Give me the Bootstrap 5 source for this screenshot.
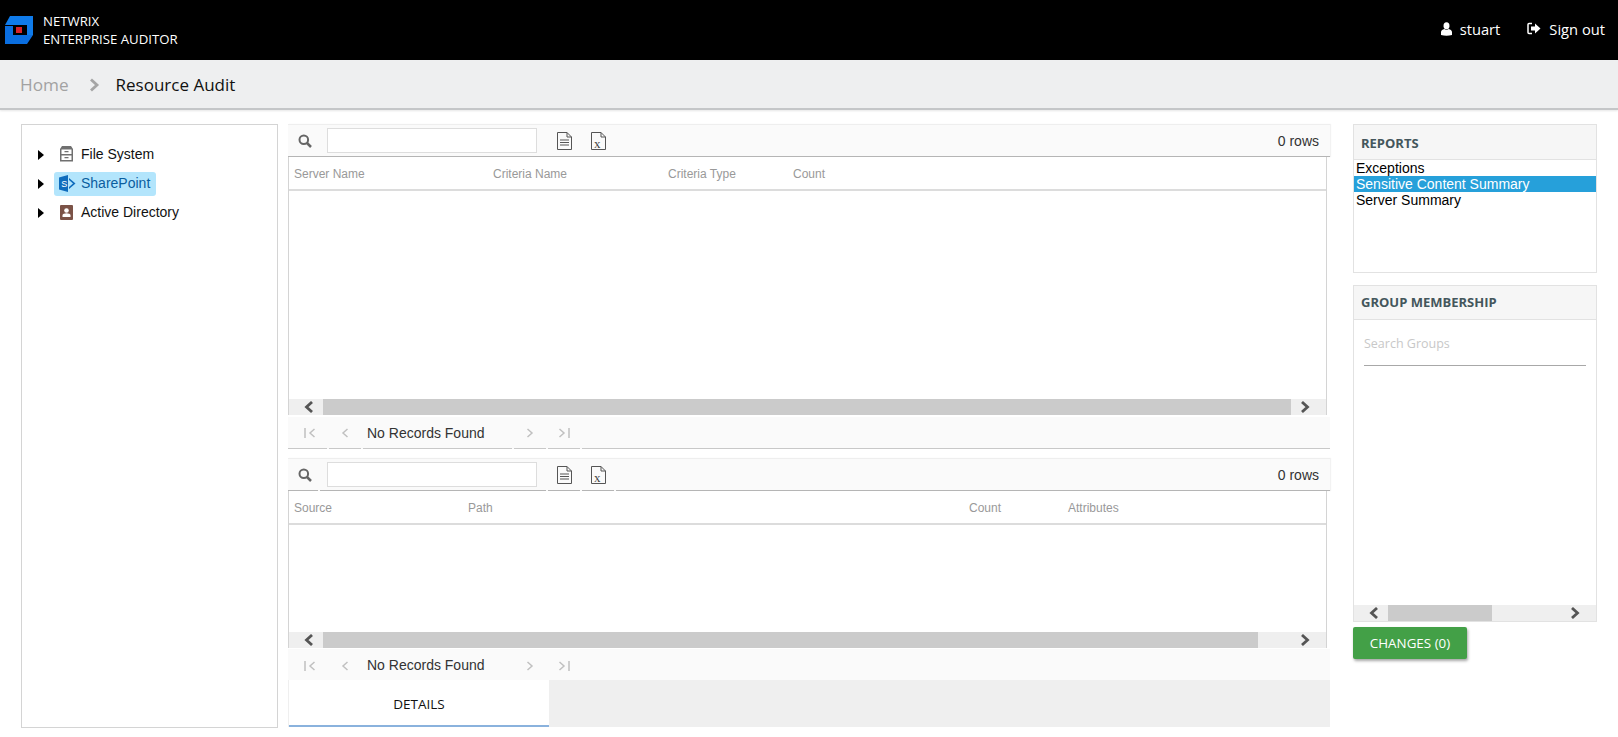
<!DOCTYPE html>
<html lang="en">
<head>
<meta charset="utf-8">
<title>Resource Audit</title>
<link rel="stylesheet" href="https://cdn.jsdelivr.net/npm/bootstrap@5.3.0/dist/css/bootstrap.min.css">
<style>
html,body{height:737px;overflow:hidden;background:#fff;font-family:"Liberation Sans",Arial,sans-serif;font-size:14px;color:#000}
.ui-font{font-family:"Open Sans","Noto Sans",sans-serif}
.top-bar{height:60px;background:#000;padding:0 13px 0 5px}
.brand-text{font-size:13.2px;line-height:18px;color:#fff;margin-left:9px;font-weight:500;white-space:nowrap}
.top-nav{padding-bottom:2px}
.top-link{color:#fff;font-size:14.7px;text-decoration:none}
.top-link svg{margin-right:8px}
.link-gap{margin-right:27px}
.crumb-bar{height:50px;background:#eeeff0;border-bottom:2px solid #c4c6c8;padding-left:20px;padding-top:2px;box-shadow:0 1px 2px rgba(0,0,0,.1)}
.crumb-home{font-size:17.2px;color:#a2a2a2;text-decoration:none}
.crumb-now{font-size:17px;color:#111}
.crumb-sep{margin:0 16px 0 19px}
.page-main{padding:14px 21px 0 21px;height:618px}
.tree-panel{width:257px;height:604px;border:1px solid #d4d4d4;margin-right:10px;padding-top:15px;flex:none}
.tree-row{height:29px;padding-left:16px}
.tree-arrow{width:0;height:0;border-left:6px solid #000;border-top:5px solid transparent;border-bottom:5px solid transparent;margin-right:10px}
.tree-item{height:24px;padding:0 6px 0 5px;border-radius:3px;font-size:14px;color:#111}
.tree-item svg{margin-right:7px}
.tree-active svg{margin-right:5px}
.tree-active{background:#b3e5fc;color:#0b5e9f}
.center-col{width:1042px;flex:none}
.tool-bar{height:33px;background:#fafafa;border-top:1px solid #eee;border-bottom:1px solid #b5b5b5;width:1042px;box-shadow:1px 0 1px rgba(0,0,0,.05)}
.tool-split{border-bottom:0;margin-top:9px}
.seg{height:32px;border-bottom:1px solid #b5b5b5;margin-right:2px}
.tool-flat .seg{border-bottom:0}
.seg-search{width:30px;padding-left:10px}
.seg-input{width:226px;padding-left:7px}
.seg-icon{width:32px}
.search-box{width:210px;height:25px;border:1px solid #ddd;background:#fff;display:block}
.row-count{margin-left:auto;font-size:14px;color:#333;padding:1px 11px 0 0}
.grid-box{width:1039px;border-left:1px solid #d4d4d4;border-right:1px solid #d4d4d4;background:#fff}
.grid-head{height:34px;padding-top:2px;border-bottom:2px solid #dcdcdc;font-size:12px;color:#999}
.col-a1{width:204px;padding-left:5px}.col-a2{width:175px}.col-a3{width:125px}
.col-b1{width:179px;padding-left:5px}.col-b2{width:501px}.col-b3{width:99px}
.grid-body-a{height:208px}
.grid-body-b{height:107px}
.h-scroll{height:16px;background:#efefef}
.scroll-left{width:34px;height:16px;flex:none;padding-left:14px}
.scroll-right{height:16px;padding-right:15px;min-width:35px;flex:none}
.scroll-thumb{height:16px;background:#cbcbcb}
.thumb-b{flex:none;width:935px}
.pager-strip{height:32px;background:#fafafa;width:1042px;margin-top:2px;font-size:14px;color:#333}
.pager-seg{height:32px;padding-top:1px;border-bottom:1px solid #c8c8c8;margin-right:2px}
.pager-first{width:39px;padding-left:16px}
.pager-arrow{width:32px}
.pager-text{width:149px;padding-left:4px}
.pager-flat{margin-top:1px}
.pager-flat .pager-seg{border-bottom:0}
.tab-strip{height:47px;width:1042px;background:#efefef;margin-top:-1px}
.tab-on{width:260px;height:47px;margin-left:1px;padding-top:4px;background:#fff;border-bottom:2px solid #8ab2dd;color:#111;font-size:13.5px}
.right-col{width:244px;margin-left:23px;flex:none}
.side-panel{border:1px solid #e2e2e2;background:#fff}
.side-head{height:34px;background:#f6f6f6;font-size:13px;font-weight:700;color:#44565c;padding-left:7px;border-bottom:1px solid #e2e2e2}
.reports{height:149px;margin-bottom:12px}
.reports .side-head{height:35px;padding-top:3px}
.report-item{height:16px;line-height:16px;padding-left:2px;font-size:14px;color:#000}
.report-on{background:#26a0da;color:#fff}
.groups{height:337px}
.group-search{margin:14px 10px 0 10px;height:32px;border-bottom:1px solid #a8a8a8;font-size:12.5px;color:#c8c8c8;padding-top:1px}
.groups-body{height:239px}
.thumb-c{flex:none;width:104px}
.changes-btn{width:114px;height:32px;margin-top:5px;background:#43a047;color:#fff;border:0;border-radius:2px;font-size:13.4px;box-shadow:1px 2px 3px rgba(0,0,0,.35);padding:0}
.changes-btn:hover{background:#43a047;color:#fff}
</style>
</head>
<body>
<header class="top-bar d-flex align-items-center justify-content-between">
  <div class="d-flex align-items-center">
    <svg width="29" height="29" viewBox="0 0 29 29"><path fill="#0f7bea" d="M5 0H28V19H22V9H0Z"/><path fill="#0a6ee0" d="M0 10H8V19H28L22 28H0Z"/><rect x="11" y="11" width="6" height="6" fill="#d8232a"/></svg>
    <div class="brand-text ui-font">NETWRIX<br>ENTERPRISE AUDITOR</div>
  </div>
  <nav class="top-nav d-flex align-items-center ui-font">
    <a class="top-link link-gap d-flex align-items-center" href="#"><svg width="11" height="14" viewBox="0 0 11 14"><ellipse cx="5.500" cy="3.800" rx="3" ry="3.500" fill="#fff"/><path fill="#fff" d="M0 13V10C0 8.300 1.800 7.500 3.200 7 4.500 8 6.500 8 7.800 7 9.200 7.500 11 8.300 11 10V13Q5.500 14.500 0 13Z"/></svg>stuart</a>
    <a class="top-link d-flex align-items-center" href="#"><svg width="14" height="13" viewBox="0 0 14 13"><path fill="none" stroke="#fff" stroke-width="1.500" d="M5 1.500H2Q1 1.500 1 2.500V10.500Q1 11.500 2 11.500H5"/><path fill="#fff" d="M4 4.500H8V1.500L13.500 6.500 8 11.500V8.500H4Z"/></svg>Sign out</a>
  </nav>
</header>
<div class="crumb-bar d-flex align-items-center ui-font">
  <a class="crumb-home" href="#">Home</a>
  <svg class="crumb-sep" width="12" height="14" viewBox="0 0 12 14"><path fill="none" stroke="#a5a5a5" stroke-width="2.800" d="M3 1.500 9 7 3 12.500"/></svg>
  <span class="crumb-now">Resource Audit</span>
</div>
<main class="page-main d-flex align-items-start">
  <aside class="tree-panel">
    <div class="tree-row d-flex align-items-center"><i class="tree-arrow"></i><div class="tree-item d-flex align-items-center"><svg width="15" height="17" viewBox="0 0 15 17"><path fill="#707070" d="M3 0H12L14 3V15.500H1V3Z"/><path fill="#fff" d="M2.500 3.500H12.500V8H2.500ZM2.500 9.500H12.500V14H2.500Z"/><path fill="#707070" d="M5.500 5H9.500V6.300H5.500ZM5.500 11H9.500V12.300H5.500Z"/></svg>File System</div></div>
    <div class="tree-row d-flex align-items-center"><i class="tree-arrow"></i><div class="tree-item tree-active d-flex align-items-center"><svg width="17" height="17" viewBox="0 0 17 17"><path fill="#0f6cbd" d="M0 2.500 9 0V17L0 14.500Z"/><path fill="#0f6cbd" d="M10 3 16.500 8.500 10 14V12L14 8.500 10 5Z"/><text x="2.300" y="12" font-size="9" font-family="Liberation Sans" fill="#fff">S</text></svg>SharePoint</div></div>
    <div class="tree-row d-flex align-items-center"><i class="tree-arrow"></i><div class="tree-item d-flex align-items-center"><svg width="15" height="15" viewBox="0 0 15 15"><rect x="1" width="13" height="15" rx="1" fill="#7b5347"/><circle cx="7.500" cy="5.500" r="2.300" fill="#fff"/><path fill="#fff" d="M3.500 12V10Q4 8.300 7.500 8.300 11 8.300 11.500 10V12Z"/></svg>Active Directory</div></div>
  </aside>

  <section class="center-col">
    <div class="tool-bar tool-flat d-flex align-items-center">
      <div class="seg seg-search d-flex align-items-center"><svg width="14" height="14" viewBox="0 0 14 14"><circle cx="5.800" cy="5.800" r="4.300" fill="none" stroke="#666" stroke-width="2"/><path stroke="#666" stroke-width="2.500" d="M9 9 13 13"/></svg></div>
      <div class="seg seg-input d-flex align-items-center"><input class="search-box" type="text" aria-label="Search"></div>
      <div class="seg seg-icon d-flex align-items-center justify-content-center"><svg width="15" height="18" viewBox="0 0 15 18"><path fill="none" stroke="#555" d="M.5.500H10L14.500 5V17.500H.5ZM10 .5V5H14.500"/><path stroke="#555" d="M3 8H12M3 10.500H12M3 13H12"/></svg></div>
      <div class="seg seg-icon d-flex align-items-center justify-content-center"><svg width="15" height="18" viewBox="0 0 15 18"><path fill="none" stroke="#555" d="M.5.500H10L14.500 5V17.500H.5ZM10 .5V5H14.500"/><text x="3" y="15.500" font-size="13" font-family="Liberation Serif" fill="#444">x</text></svg></div>
      <span class="row-count">0 rows</span>
    </div>
    <div class="grid-box">
      <div class="grid-head d-flex align-items-center"><span class="col-a1">Server Name</span><span class="col-a2">Criteria Name</span><span class="col-a3">Criteria Type</span><span>Count</span></div>
      <div class="grid-body-a"></div>
      <div class="h-scroll d-flex">
        <div class="scroll-left d-flex align-items-center"><svg width="12" height="12" viewBox="0 0 12 12"><path fill="none" stroke="#555" stroke-width="2.800" d="M9 1 3.500 6 9 11"/></svg></div>
        <div class="scroll-thumb flex-grow-1"></div>
        <div class="scroll-right d-flex align-items-center justify-content-end"><svg width="12" height="12" viewBox="0 0 12 12"><path fill="none" stroke="#555" stroke-width="2.800" d="M3 1 8.500 6 3 11"/></svg></div>
      </div>
    </div>
    <div class="pager-strip d-flex align-items-center">
      <div class="pager-seg pager-first d-flex align-items-center"><svg width="12" height="10" viewBox="0 0 12 10"><path fill="none" stroke="#c0c0c0" stroke-width="1.500" d="M1 0V10M10.500 1 6 5 10.500 9"/></svg></div>
      <div class="pager-seg pager-arrow d-flex align-items-center justify-content-center"><svg width="8" height="10" viewBox="0 0 8 10"><path fill="none" stroke="#c0c0c0" stroke-width="1.500" d="M6.500 1 2 5 6.500 9"/></svg></div>
      <div class="pager-seg pager-text d-flex align-items-center">No Records Found</div>
      <div class="pager-seg pager-arrow d-flex align-items-center justify-content-center"><svg width="8" height="10" viewBox="0 0 8 10"><path fill="none" stroke="#c0c0c0" stroke-width="1.500" d="M1.500 1 6 5 1.500 9"/></svg></div>
      <div class="pager-seg pager-arrow d-flex align-items-center justify-content-center"><svg width="12" height="10" viewBox="0 0 12 10"><path fill="none" stroke="#c0c0c0" stroke-width="1.500" d="M1.500 1 6 5 1.500 9M11 0V10"/></svg></div>
      <div class="pager-seg flex-grow-1 me-0"></div>
    </div>

    <div class="tool-bar tool-split d-flex align-items-center">
      <div class="seg seg-search d-flex align-items-center"><svg width="14" height="14" viewBox="0 0 14 14"><circle cx="5.800" cy="5.800" r="4.300" fill="none" stroke="#666" stroke-width="2"/><path stroke="#666" stroke-width="2.500" d="M9 9 13 13"/></svg></div>
      <div class="seg seg-input d-flex align-items-center"><input class="search-box" type="text" aria-label="Search"></div>
      <div class="seg seg-icon d-flex align-items-center justify-content-center"><svg width="15" height="18" viewBox="0 0 15 18"><path fill="none" stroke="#555" d="M.5.500H10L14.500 5V17.500H.5ZM10 .5V5H14.500"/><path stroke="#555" d="M3 8H12M3 10.500H12M3 13H12"/></svg></div>
      <div class="seg seg-icon d-flex align-items-center justify-content-center"><svg width="15" height="18" viewBox="0 0 15 18"><path fill="none" stroke="#555" d="M.5.500H10L14.500 5V17.500H.5ZM10 .5V5H14.500"/><text x="3" y="15.500" font-size="13" font-family="Liberation Serif" fill="#444">x</text></svg></div>
      <div class="seg d-flex align-items-center flex-grow-1 me-0"><span class="row-count">0 rows</span></div>
    </div>
    <div class="grid-box">
      <div class="grid-head d-flex align-items-center"><span class="col-b1">Source</span><span class="col-b2">Path</span><span class="col-b3">Count</span><span>Attributes</span></div>
      <div class="grid-body-b"></div>
      <div class="h-scroll d-flex">
        <div class="scroll-left d-flex align-items-center"><svg width="12" height="12" viewBox="0 0 12 12"><path fill="none" stroke="#555" stroke-width="2.800" d="M9 1 3.500 6 9 11"/></svg></div>
        <div class="scroll-thumb thumb-b"></div>
        <div class="scroll-right flex-grow-1 d-flex align-items-center justify-content-end"><svg width="12" height="12" viewBox="0 0 12 12"><path fill="none" stroke="#555" stroke-width="2.800" d="M3 1 8.500 6 3 11"/></svg></div>
      </div>
    </div>
    <div class="pager-strip pager-flat d-flex align-items-center">
      <div class="pager-seg pager-first d-flex align-items-center"><svg width="12" height="10" viewBox="0 0 12 10"><path fill="none" stroke="#c0c0c0" stroke-width="1.500" d="M1 0V10M10.500 1 6 5 10.500 9"/></svg></div>
      <div class="pager-seg pager-arrow d-flex align-items-center justify-content-center"><svg width="8" height="10" viewBox="0 0 8 10"><path fill="none" stroke="#c0c0c0" stroke-width="1.500" d="M6.500 1 2 5 6.500 9"/></svg></div>
      <div class="pager-seg pager-text d-flex align-items-center">No Records Found</div>
      <div class="pager-seg pager-arrow d-flex align-items-center justify-content-center"><svg width="8" height="10" viewBox="0 0 8 10"><path fill="none" stroke="#c0c0c0" stroke-width="1.500" d="M1.500 1 6 5 1.500 9"/></svg></div>
      <div class="pager-seg pager-arrow d-flex align-items-center justify-content-center"><svg width="12" height="10" viewBox="0 0 12 10"><path fill="none" stroke="#c0c0c0" stroke-width="1.500" d="M1.500 1 6 5 1.500 9M11 0V10"/></svg></div>
    </div>
    <div class="tab-strip d-flex">
      <div class="tab-on ui-font d-flex align-items-center justify-content-center">DETAILS</div>
    </div>
  </section>

  <aside class="right-col">
    <div class="side-panel reports">
      <div class="side-head ui-font d-flex align-items-center">REPORTS</div>
      <div>
        <div class="report-item">Exceptions</div>
        <div class="report-item report-on">Sensitive Content Summary</div>
        <div class="report-item">Server Summary</div>
      </div>
    </div>
    <div class="side-panel groups">
      <div class="side-head ui-font d-flex align-items-center">GROUP MEMBERSHIP</div>
      <div class="group-search ui-font">Search Groups</div>
      <div class="groups-body"></div>
      <div class="h-scroll d-flex">
        <div class="scroll-left d-flex align-items-center"><svg width="12" height="12" viewBox="0 0 12 12"><path fill="none" stroke="#555" stroke-width="2.800" d="M9 1 3.500 6 9 11"/></svg></div>
        <div class="scroll-thumb thumb-c"></div>
        <div class="scroll-right flex-grow-1 d-flex align-items-center justify-content-end"><svg width="12" height="12" viewBox="0 0 12 12"><path fill="none" stroke="#555" stroke-width="2.800" d="M3 1 8.500 6 3 11"/></svg></div>
      </div>
    </div>
    <button type="button" class="btn changes-btn ui-font">CHANGES (0)</button>
  </aside>
</main>
<script src="https://cdn.jsdelivr.net/npm/bootstrap@5.3.0/dist/js/bootstrap.bundle.min.js"></script>
</body>
</html>
